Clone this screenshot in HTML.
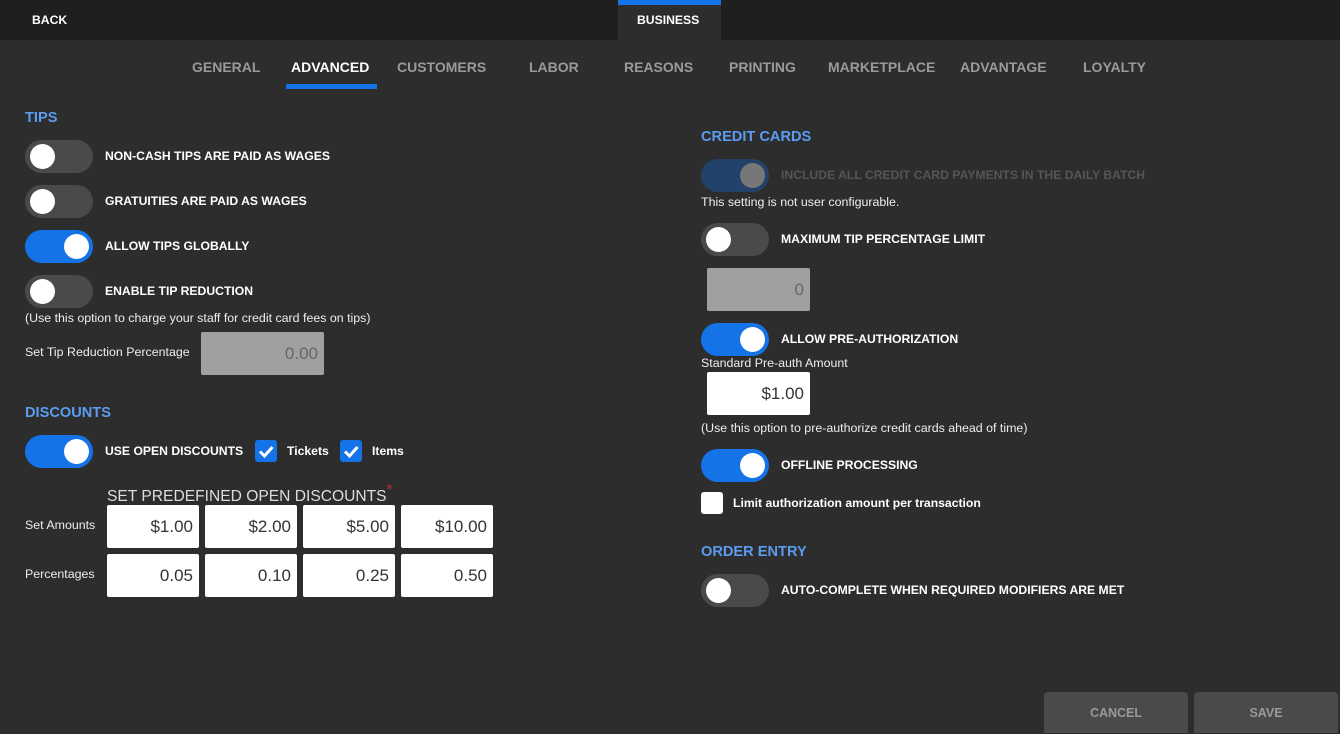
<!DOCTYPE html>
<html><head><meta charset="utf-8"><style>
*{margin:0;padding:0;box-sizing:border-box}
body{width:1340px;height:733px;background:#2d2d2d;font-family:"Liberation Sans",sans-serif;color:#fff;position:relative;overflow:hidden}
.a{position:absolute;white-space:nowrap}
.top{left:0;top:0;width:1340px;height:40px;background:#1f1f1f}
.b{font-weight:bold;font-size:12.2px}
.tab{font-weight:bold;font-size:14px;color:#9a9a9a;top:59px}
.h{font-weight:bold;font-size:14.6px;color:#5b9cf0}
.tg{width:68px;height:33px;border-radius:17px;background:#4a4a4a}
.tg i{position:absolute;top:4px;left:5px;width:25px;height:25px;border-radius:50%;background:#fff}
.tg.on{background:#1473e6}
.tg.on i{left:39px}
.tg.dis{background:#23426a}
.tg.dis i{left:39px;background:#777}
.s{font-size:12.4px;color:#eee}
.box{background:#fff;color:#333;font-size:17px;text-align:right;padding-right:6px;border-radius:2px}
.gbox{background:#a0a0a0;color:#666;font-size:17px;text-align:right;padding-right:6px;border-radius:2px}
.cb{width:22px;height:22px;border-radius:3px;background:#1473e6}
.btn{background:#4a4a4a;color:#999;font-weight:bold;font-size:12.5px;text-align:center;line-height:42px;border-radius:4px 4px 0 0}
</style></head><body>
<div class="a top"></div>
<div class="a b" style="left:32px;top:13px">BACK</div>
<div class="a" style="left:618px;top:0;width:103px;height:40px;background:#2d2d2d;border-top:5px solid #1473e6"></div>
<div class="a b" style="left:637px;top:13px">BUSINESS</div>

<div class="a tab" style="left:192px">GENERAL</div>
<div class="a tab" style="left:291px;color:#fff">ADVANCED</div>
<div class="a" style="left:286px;top:84px;width:91px;height:5px;background:#1473e6"></div>
<div class="a tab" style="left:397px">CUSTOMERS</div>
<div class="a tab" style="left:529px">LABOR</div>
<div class="a tab" style="left:624px">REASONS</div>
<div class="a tab" style="left:729px">PRINTING</div>
<div class="a tab" style="left:828px">MARKETPLACE</div>
<div class="a tab" style="left:960px">ADVANTAGE</div>
<div class="a tab" style="left:1083px">LOYALTY</div>

<div class="a h" style="left:25px;top:110px">TIPS</div>
<div class="a tg" style="left:25px;top:140px"><i></i></div>
<div class="a b" style="left:105px;top:149px">NON-CASH TIPS ARE PAID AS WAGES</div>
<div class="a tg" style="left:25px;top:185px"><i></i></div>
<div class="a b" style="left:105px;top:194px">GRATUITIES ARE PAID AS WAGES</div>
<div class="a tg on" style="left:25px;top:230px"><i></i></div>
<div class="a b" style="left:105px;top:239px">ALLOW TIPS GLOBALLY</div>
<div class="a tg" style="left:25px;top:275px"><i></i></div>
<div class="a b" style="left:105px;top:284px">ENABLE TIP REDUCTION</div>
<div class="a s" style="left:25px;top:311px">(Use this option to charge your staff for credit card fees on tips)</div>
<div class="a s" style="left:25px;top:345px">Set Tip Reduction Percentage</div>
<div class="a gbox" style="left:201px;top:332px;width:123px;height:43px;line-height:43px">0.00</div>

<div class="a h" style="left:25px;top:405px">DISCOUNTS</div>
<div class="a tg on" style="left:25px;top:435px"><i></i></div>
<div class="a b" style="left:105px;top:444px">USE OPEN DISCOUNTS</div>
<div class="a cb" style="left:255px;top:440px"><svg width="22" height="22"><path d="M5 11.5l4.5 4.5L17.5 7" stroke="#fff" stroke-width="3" fill="none"/></svg></div>
<div class="a b" style="left:287px;top:444px">Tickets</div>
<div class="a cb" style="left:340px;top:440px"><svg width="22" height="22"><path d="M5 11.5l4.5 4.5L17.5 7" stroke="#fff" stroke-width="3" fill="none"/></svg></div>
<div class="a b" style="left:372px;top:444px">Items</div>
<div class="a" style="left:107px;top:481px;font-size:15.6px;color:#ddd">SET PREDEFINED OPEN DISCOUNTS<span style="color:#c0282d;font-size:15px;vertical-align:7px">*</span></div>
<div class="a s" style="left:25px;top:518px">Set Amounts</div>
<div class="a s" style="left:25px;top:567px">Percentages</div>
<div class="a box" style="left:107px;top:505px;width:92px;height:43px;line-height:43px">$1.00</div>
<div class="a box" style="left:205px;top:505px;width:92px;height:43px;line-height:43px">$2.00</div>
<div class="a box" style="left:303px;top:505px;width:92px;height:43px;line-height:43px">$5.00</div>
<div class="a box" style="left:401px;top:505px;width:92px;height:43px;line-height:43px">$10.00</div>
<div class="a box" style="left:107px;top:554px;width:92px;height:43px;line-height:43px">0.05</div>
<div class="a box" style="left:205px;top:554px;width:92px;height:43px;line-height:43px">0.10</div>
<div class="a box" style="left:303px;top:554px;width:92px;height:43px;line-height:43px">0.25</div>
<div class="a box" style="left:401px;top:554px;width:92px;height:43px;line-height:43px">0.50</div>

<div class="a h" style="left:701px;top:129px">CREDIT CARDS</div>
<div class="a tg dis" style="left:701px;top:159px"><i></i></div>
<div class="a b" style="left:781px;top:168px;color:#555">INCLUDE ALL CREDIT CARD PAYMENTS IN THE DAILY BATCH</div>
<div class="a s" style="left:701px;top:195px">This setting is not user configurable.</div>
<div class="a tg" style="left:701px;top:223px"><i></i></div>
<div class="a b" style="left:781px;top:232px">MAXIMUM TIP PERCENTAGE LIMIT</div>
<div class="a gbox" style="left:707px;top:268px;width:103px;height:43px;line-height:43px">0</div>
<div class="a tg on" style="left:701px;top:323px"><i></i></div>
<div class="a b" style="left:781px;top:332px">ALLOW PRE-AUTHORIZATION</div>
<div class="a s" style="left:701px;top:356px">Standard Pre-auth Amount</div>
<div class="a box" style="left:707px;top:372px;width:103px;height:43px;line-height:43px">$1.00</div>
<div class="a s" style="left:701px;top:421px">(Use this option to pre-authorize credit cards ahead of time)</div>
<div class="a tg on" style="left:701px;top:449px"><i></i></div>
<div class="a b" style="left:781px;top:458px">OFFLINE PROCESSING</div>
<div class="a" style="left:701px;top:492px;width:22px;height:22px;background:#fff;border-radius:3px"></div>
<div class="a b" style="left:733px;top:496px">Limit authorization amount per transaction</div>

<div class="a h" style="left:701px;top:544px">ORDER ENTRY</div>
<div class="a tg" style="left:701px;top:574px"><i></i></div>
<div class="a b" style="left:781px;top:583px">AUTO-COMPLETE WHEN REQUIRED MODIFIERS ARE MET</div>

<div class="a btn" style="left:1044px;top:692px;width:144px;height:41px">CANCEL</div>
<div class="a btn" style="left:1194px;top:692px;width:144px;height:41px">SAVE</div>
</body></html>
